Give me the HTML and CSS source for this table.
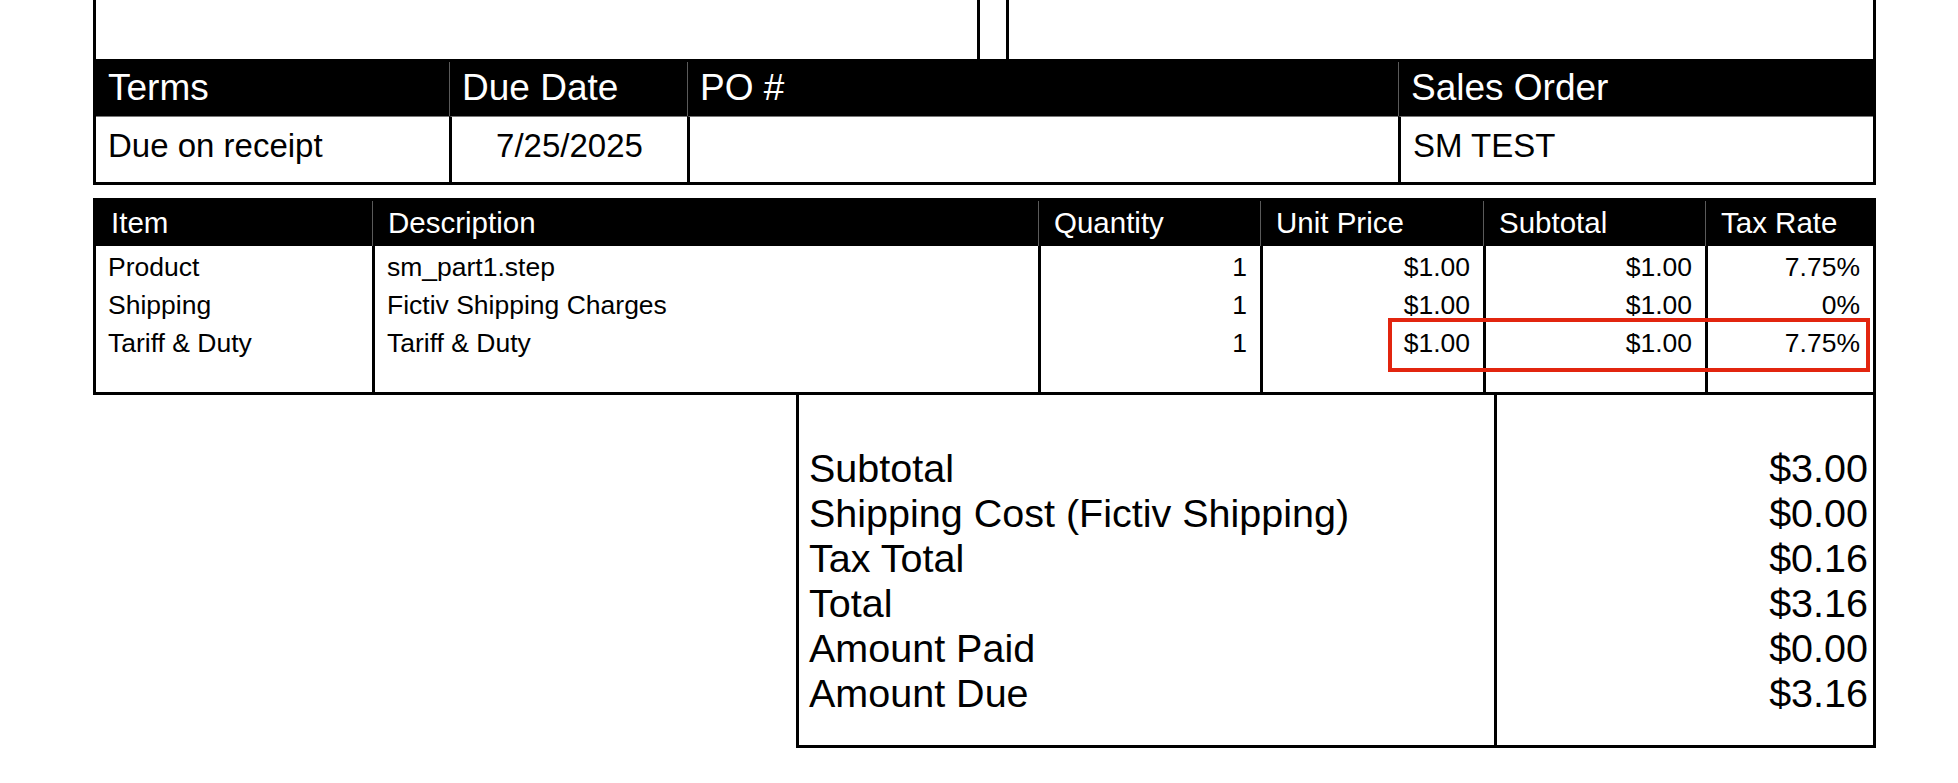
FILE: index.html
```html
<!DOCTYPE html>
<html>
<head>
<meta charset="utf-8">
<link rel="stylesheet" href="styles.css">
</head>
<body>
<div class="page">
  <div class="stub">
    <div class="stub-left"></div>
    <div class="stub-right"></div>
  </div>

  <table class="meta">
    <colgroup>
      <col class="m1"><col class="m2"><col class="m3"><col class="m4">
    </colgroup>
    <thead>
      <tr><th>Terms</th><th class="sep">Due Date</th><th class="sep">PO #</th><th class="sep">Sales Order</th></tr>
    </thead>
    <tbody>
      <tr><td>Due on receipt</td><td class="sep center">7/25/2025</td><td class="sep"></td><td class="sep">SM TEST</td></tr>
    </tbody>
  </table>

  <div class="items-wrap">
    <table class="items">
      <colgroup>
        <col class="c1"><col class="c2"><col class="c3"><col class="c4"><col class="c5"><col class="c6">
      </colgroup>
      <thead>
        <tr>
          <th>Item</th><th class="sep">Description</th><th class="sep">Quantity</th><th class="sep">Unit Price</th><th class="sep">Subtotal</th><th class="sep">Tax Rate</th>
        </tr>
      </thead>
      <tbody>
        <tr class="first">
          <td>Product</td><td class="sep">sm_part1.step</td><td class="sep num">1</td><td class="sep num">$1.00</td><td class="sep num">$1.00</td><td class="sep num">7.75%</td>
        </tr>
        <tr>
          <td>Shipping</td><td class="sep">Fictiv Shipping Charges</td><td class="sep num">1</td><td class="sep num">$1.00</td><td class="sep num">$1.00</td><td class="sep num">0%</td>
        </tr>
        <tr>
          <td>Tariff &amp; Duty</td><td class="sep">Tariff &amp; Duty</td><td class="sep num">1</td><td class="sep num">$1.00</td><td class="sep num">$1.00</td><td class="sep num">7.75%</td>
        </tr>
        <tr class="filler">
          <td></td><td class="sep"></td><td class="sep"></td><td class="sep"></td><td class="sep"></td><td class="sep"></td>
        </tr>
      </tbody>
    </table>
    <div class="highlight"></div>
  </div>

  <div class="totals">
    <div class="tot-labels">
      <div>Subtotal</div>
      <div>Shipping Cost (Fictiv Shipping)</div>
      <div>Tax Total</div>
      <div>Total</div>
      <div>Amount Paid</div>
      <div>Amount Due</div>
    </div>
    <div class="tot-values">
      <div>$3.00</div>
      <div>$0.00</div>
      <div>$0.16</div>
      <div>$3.16</div>
      <div>$0.00</div>
      <div>$3.16</div>
    </div>
  </div>
</div>
</body>
</html>
```

FILE: styles.css
```css
* { box-sizing: border-box; }

html, body {
  margin: 0;
  padding: 0;
  background: #fff;
}

body {
  font-family: "Liberation Sans", Arial, Helvetica, sans-serif;
  color: #000;
}

.page {
  margin-left: 93px;
  width: 1783px;
}

/* top stub of the previous boxes */
.stub {
  display: flex;
  gap: 26px;
  height: 59px;
}
.stub-left {
  width: 887px;
  border-left: 3px solid #000;
  border-right: 3px solid #000;
}
.stub-right {
  flex: 1;
  border-left: 3px solid #000;
  border-right: 3px solid #000;
}

/* terms table */
table {
  border-collapse: separate;
  border-spacing: 0;
  table-layout: fixed;
  width: 1783px;
  border: 3px solid #000;
}

.meta .m1 { width: 353px; }
.meta .m2 { width: 238px; }
.meta .m3 { width: 711px; }
.meta .m4 { width: 475px; }

.meta th {
  background: #000;
  color: #fff;
  font-weight: normal;
  font-size: 37px;
  text-align: left;
  height: 54px;
  line-height: 52px;
  padding: 0 0 2px 12px;
  white-space: nowrap;
}
.meta th.sep { border-left: 1px solid #5a5a5a; }

.meta td {
  font-size: 33px;
  height: 65px;
  line-height: 58px;
  padding: 0 0 7px 12px;
  vertical-align: top;
  border-top: 1px solid #777;
  white-space: nowrap;
}
.meta td.sep { border-left: 3px solid #000; }
.meta td.center { text-align: center; padding-left: 0; }

/* items table */
.items-wrap {
  position: relative;
  margin-top: 13px;
}

.items .c1 { width: 276px; }
.items .c2 { width: 666px; }
.items .c3 { width: 222px; }
.items .c4 { width: 223px; }
.items .c5 { width: 222px; }
.items .c6 { width: 168px; }

.items th {
  background: #000;
  color: #fff;
  font-weight: normal;
  font-size: 29.5px;
  text-align: left;
  height: 45px;
  line-height: 44px;
  padding: 0 0 1px 15px;
  white-space: nowrap;
}
.items th.sep { border-left: 1px solid #5a5a5a; }

.items td {
  font-size: 26.5px;
  height: 38px;
  line-height: 38px;
  padding: 0 0 0 12px;
  white-space: nowrap;
  vertical-align: top;
}
.items tr.first td {
  height: 40px;
  padding-top: 2px;
}
.items td.sep { border-left: 3px solid #000; }
.items td.num {
  text-align: right;
  padding-right: 13px;
  padding-left: 0;
}
.items tr.filler td { height: 30px; }

.highlight {
  position: absolute;
  left: 1295px;
  top: 120px;
  width: 482px;
  height: 54px;
  border: 4px solid #e2250f;
  pointer-events: none;
}

/* totals */
.totals {
  margin-left: 703px;
  width: 1080px;
  height: 353px;
  display: grid;
  grid-template-columns: 698px 1fr;
  border-left: 3px solid #000;
  border-right: 3px solid #000;
  border-bottom: 3px solid #000;
  font-size: 39.5px;
  line-height: 45px;
}
.tot-labels {
  border-right: 3px solid #000;
  padding: 51px 0 0 10px;
  white-space: nowrap;
}
.tot-values {
  text-align: right;
  padding: 51px 5px 0 0;
}
```
